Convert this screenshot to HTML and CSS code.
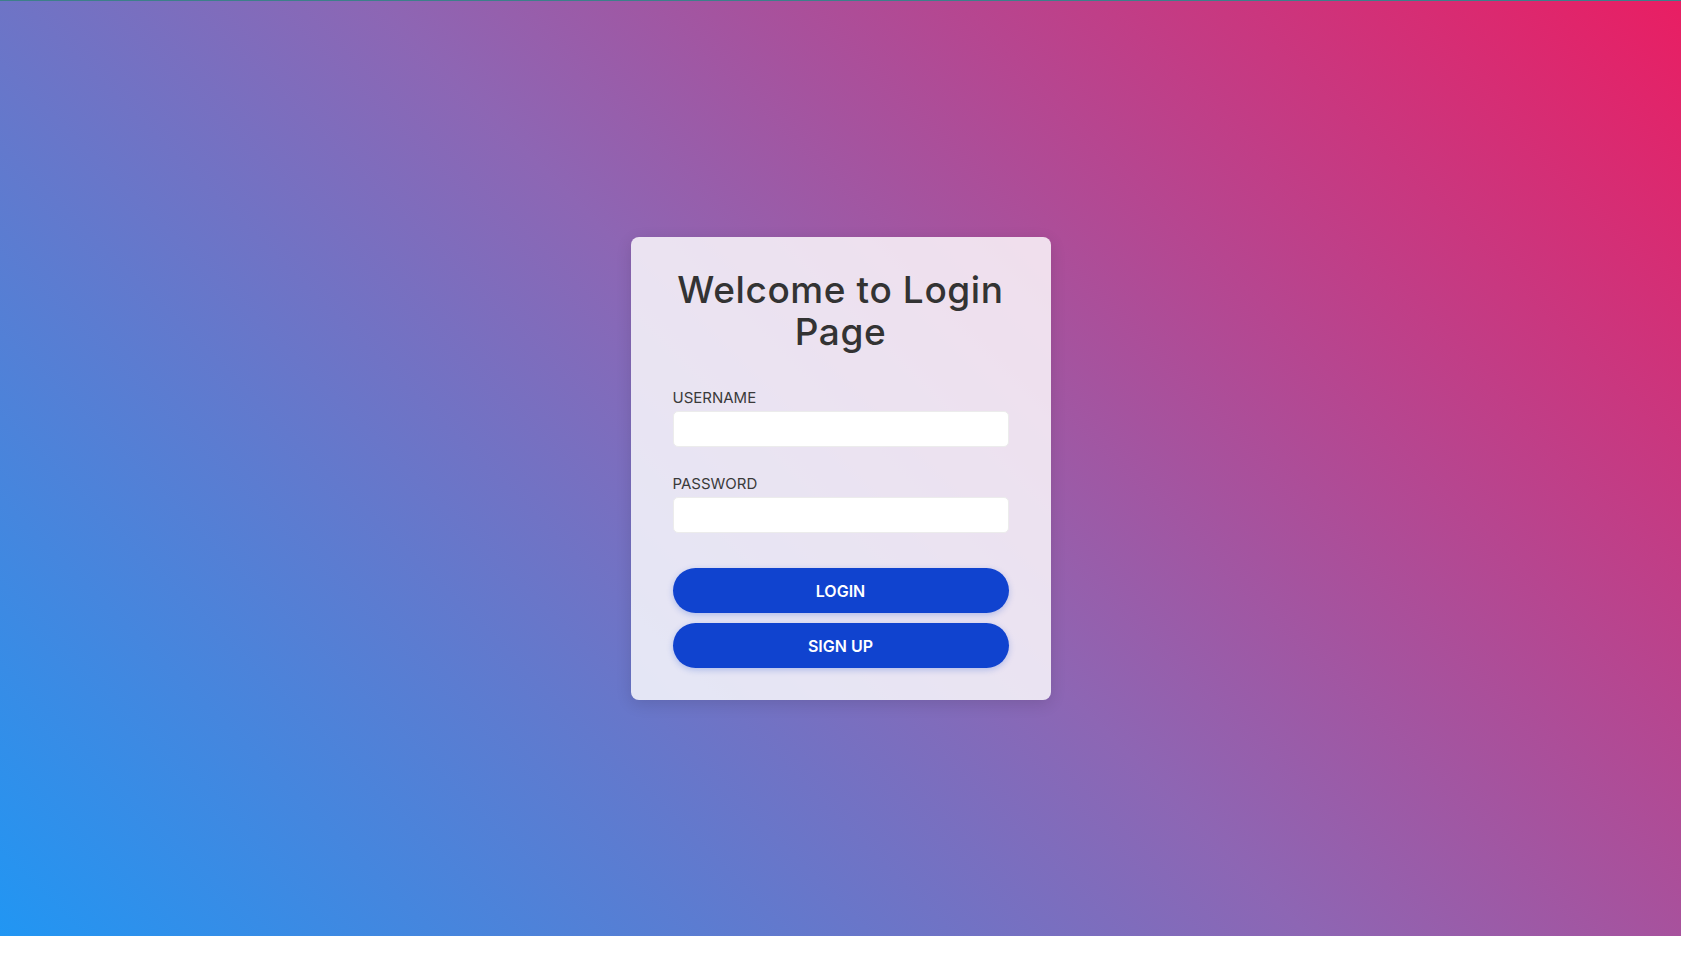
FILE: index.html
```html
<!DOCTYPE html>
<html lang="en">
<head>
<meta charset="utf-8">
<title>Login</title>
<link rel="stylesheet" href="styles.css">
</head>
<body>
<section class="hero">
  <form class="card">
    <h1 class="title">Welcome to Login Page</h1>
    <div class="field">
      <label class="label" for="u">USERNAME</label>
      <input class="input" id="u" type="text">
    </div>
    <div class="field">
      <label class="label" for="p">PASSWORD</label>
      <input class="input" id="p" type="password">
    </div>
    <div class="actions">
      <button type="button" class="btn">LOGIN</button>
      <button type="button" class="btn">SIGN UP</button>
    </div>
  </form>
</section>
</body>
</html>
```

FILE: styles.css
```css
html, body {
  margin: 0;
  padding: 0;
  background: #ffffff;
}
body {
  font-family: Inter, "Open Sans", sans-serif;
  color: #333333;
}
.hero {
  box-sizing: border-box;
  height: calc(100vh - 30px);
  border-top: 1px solid #3d7f8a;
  background: linear-gradient(45deg, #2196f3 0%, #8d66b4 50%, #e91e63 100%);
  display: flex;
  align-items: center;
  justify-content: center;
}
.card {
  box-sizing: border-box;
  width: 420px;
  height: 463px;
  padding: 32px 42px;
  background: rgba(255, 255, 255, 0.82);
  border-radius: 8px;
  box-shadow: 0 4px 16px rgba(0, 0, 0, 0.12);
  display: flex;
  flex-direction: column;
}
.title {
  margin: 0 0 35px;
  text-align: center;
  font-size: 37px;
  line-height: 42px;
  font-weight: 500;
  color: #333333;
  letter-spacing: 0.6px;
}
.field {
  display: flex;
  flex-direction: column;
  margin-bottom: 27px;
}
.label {
  font-size: 15px;
  line-height: 20px;
  color: #3a3a3a;
  margin-bottom: 3px;
}
.input {
  box-sizing: border-box;
  height: 36px;
  border: 1px solid #ececec;
  border-radius: 5px;
  background: #ffffff;
  outline: none;
}
.actions {
  display: flex;
  flex-direction: column;
  gap: 10px;
  margin-top: 8px;
}
.btn {
  height: 45px;
  border: none;
  border-radius: 23px;
  background: #1043cf;
  color: #ffffff;
  font-family: Inter, "Open Sans", sans-serif;
  font-size: 16px;
  font-weight: 600;
  box-shadow: 0 2px 6px rgba(16, 67, 207, 0.25);
}
```
